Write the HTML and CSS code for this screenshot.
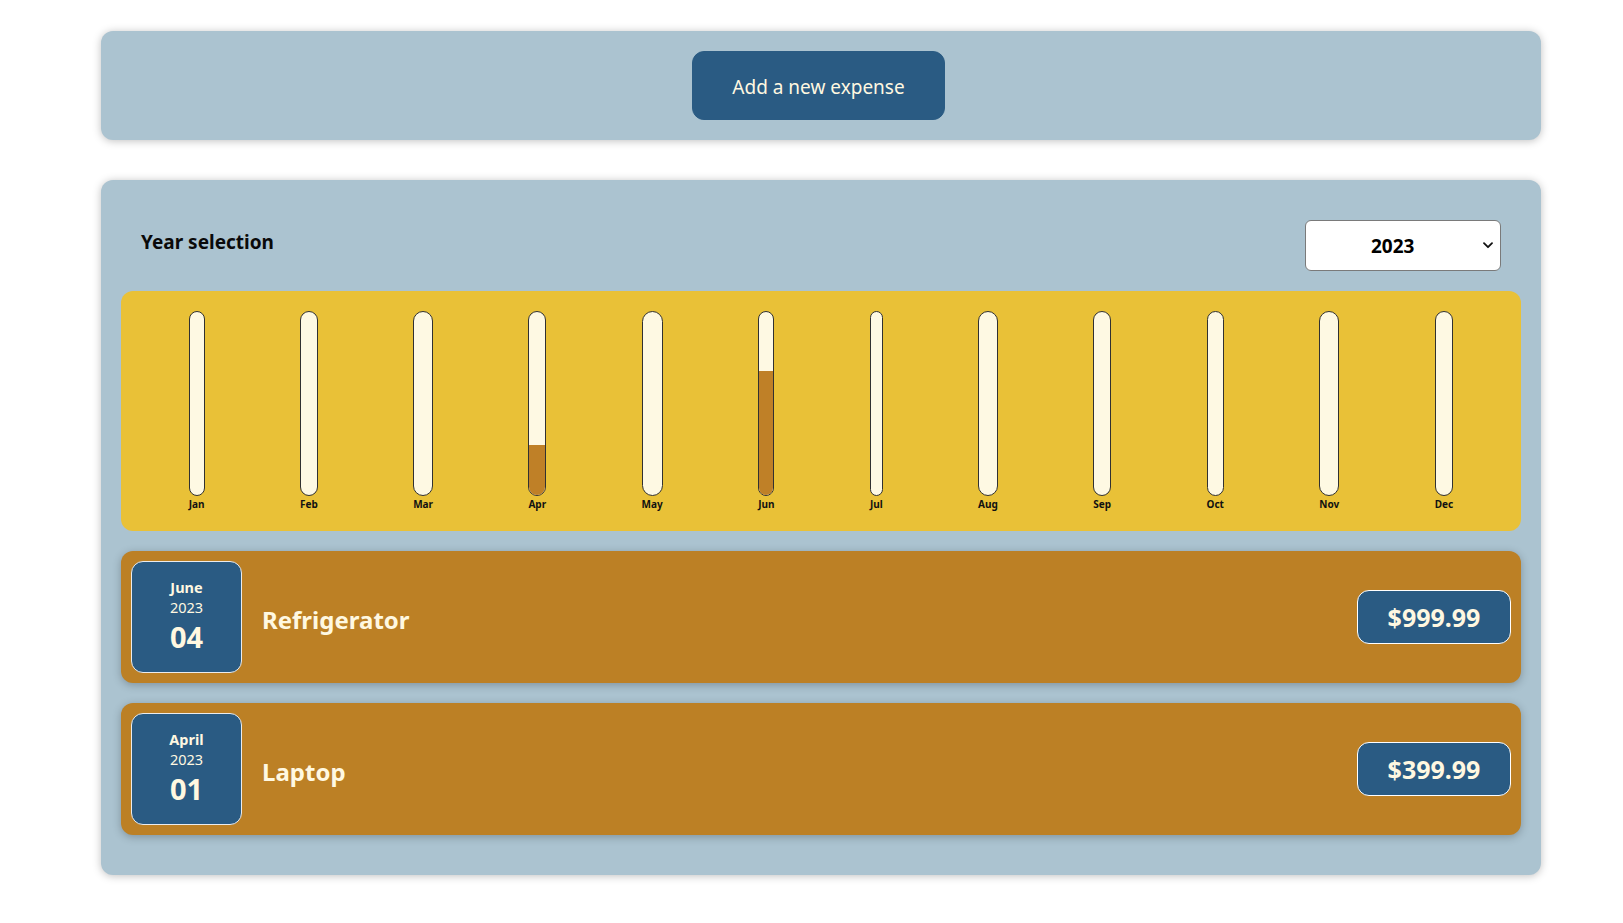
FILE: index.html
```html
<!DOCTYPE html>
<html lang="en">
<head>
<meta charset="utf-8">
<title>Expenses</title>
<link rel="stylesheet" href="styles.css">
</head>
<body>
  <div class="new-expense">
    <button class="new-expense__btn" type="button">Add a new expense</button>
  </div>

  <div class="expenses">
    <div class="filter">
      <label class="filter__label" for="year">Year selection</label>
      <div class="filter__select-wrap">
        <select id="year" class="filter__select">
          <option>2023</option>
          <option>2022</option>
          <option>2021</option>
          <option>2020</option>
        </select>
        <svg class="filter__chevron" width="10" height="7" viewBox="0 0 10 7" aria-hidden="true">
          <path d="M1 1.2 L5 5.2 L9 1.2" fill="none" stroke="#111" stroke-width="1.8" stroke-linecap="round" stroke-linejoin="round"/>
        </svg>
      </div>
    </div>

    <div class="chart">
      <div class="bar"><div class="bar__inner"><div class="bar__fill" style="height:0%"></div></div><div class="bar__label">Jan</div></div>
      <div class="bar"><div class="bar__inner"><div class="bar__fill" style="height:0%"></div></div><div class="bar__label">Feb</div></div>
      <div class="bar"><div class="bar__inner"><div class="bar__fill" style="height:0%"></div></div><div class="bar__label">Mar</div></div>
      <div class="bar"><div class="bar__inner"><div class="bar__fill" style="height:27.2%"></div></div><div class="bar__label">Apr</div></div>
      <div class="bar"><div class="bar__inner"><div class="bar__fill" style="height:0%"></div></div><div class="bar__label">May</div></div>
      <div class="bar"><div class="bar__inner"><div class="bar__fill" style="height:68%"></div></div><div class="bar__label">Jun</div></div>
      <div class="bar"><div class="bar__inner"><div class="bar__fill" style="height:0%"></div></div><div class="bar__label">Jul</div></div>
      <div class="bar"><div class="bar__inner"><div class="bar__fill" style="height:0%"></div></div><div class="bar__label">Aug</div></div>
      <div class="bar"><div class="bar__inner"><div class="bar__fill" style="height:0%"></div></div><div class="bar__label">Sep</div></div>
      <div class="bar"><div class="bar__inner"><div class="bar__fill" style="height:0%"></div></div><div class="bar__label">Oct</div></div>
      <div class="bar"><div class="bar__inner"><div class="bar__fill" style="height:0%"></div></div><div class="bar__label">Nov</div></div>
      <div class="bar"><div class="bar__inner"><div class="bar__fill" style="height:0%"></div></div><div class="bar__label">Dec</div></div>
    </div>

    <ul class="list">
      <li class="item">
        <div class="date">
          <div class="date__month">June</div>
          <div class="date__year">2023</div>
          <div class="date__day">04</div>
        </div>
        <h2 class="item__title">Refrigerator</h2>
        <div class="item__price">$999.99</div>
      </li>
      <li class="item">
        <div class="date">
          <div class="date__month">April</div>
          <div class="date__year">2023</div>
          <div class="date__day">01</div>
        </div>
        <h2 class="item__title">Laptop</h2>
        <div class="item__price">$399.99</div>
      </li>
    </ul>
  </div>
</body>
</html>
```

FILE: styles.css
```css
* {
  box-sizing: border-box;
}

html {
  font-size: 20px;
}

body {
  margin: 0;
  background: #ffffff;
  font-family: "Noto Sans", "Open Sans", "Liberation Sans", sans-serif;
}

.new-expense {
  width: 1440px;
  margin: 31px 0 0 101px;
  padding: 20px;
  background: #abc3d0;
  border-radius: 12px;
  box-shadow: 0 1px 8px rgba(0, 0, 0, 0.25);
  display: flex;
  justify-content: center;
}

.new-expense__btn {
  font-family: inherit;
  font-size: 19px;
  line-height: 27px;
  color: #fff8e1;
  background: #2a5b83;
  border: 1px solid #2a5b83;
  border-radius: 12px;
  width: 253px;
  height: 69px;
  padding: 4px 0 0;
  margin-right: 5px;
  cursor: pointer;
}

.expenses {
  width: 1440px;
  margin: 40px 0 40px 101px;
  padding: 20px;
  background: #abc3d0;
  border-radius: 12px;
  box-shadow: 0 1px 8px rgba(0, 0, 0, 0.25);
}

.filter {
  display: flex;
  align-items: center;
  justify-content: space-between;
  padding: 0 20px;
  margin: 20px 0;
}

.filter__label {
  font-weight: 700;
  font-size: 19px;
  color: #0a0a0a;
  margin-bottom: 8px;
}

.filter__select-wrap {
  position: relative;
  width: 196px;
  height: 51px;
}

.filter__select {
  appearance: none;
  -webkit-appearance: none;
  width: 100%;
  height: 100%;
  padding: 1px 0 0 65px;
  font-family: inherit;
  font-size: 19px;
  font-weight: 700;
  color: #000;
  background: #ffffff;
  border: 1px solid #7a7a7a;
  border-radius: 6px;
}

.filter__chevron {
  position: absolute;
  right: 8px;
  top: 22px;
  pointer-events: none;
}

.chart {
  height: 240px;
  padding: 20px;
  border-radius: 12px;
  background: #e9c137;
  display: flex;
  justify-content: space-around;
}

.bar {
  height: 100%;
  display: flex;
  flex-direction: column;
  align-items: center;
}

.bar__inner {
  flex: 1;
  width: 100%;
  border: 1px solid #313131;
  border-radius: 12px;
  background: #fef9e3;
  overflow: hidden;
  display: flex;
  flex-direction: column;
  justify-content: flex-end;
}

.bar__fill {
  width: 100%;
  background: #bf8027;
}

.bar__label {
  font-size: 10px;
  line-height: 14px;
  font-weight: 700;
  color: #111;
  text-align: center;
  padding-top: 1px;
}

.list {
  list-style: none;
  margin: 0;
  padding: 0;
}

.item {
  display: flex;
  align-items: center;
  padding: 10px;
  margin: 20px 0;
  border-radius: 12px;
  background: #bc8025;
  box-shadow: 0 2px 8px rgba(0, 0, 0, 0.25);
}

.date {
  width: 111px;
  height: 112px;
  flex: none;
  display: flex;
  flex-direction: column;
  align-items: center;
  justify-content: center;
  border: 1px solid #ececec;
  border-radius: 12px;
  background: #2a5b83;
  color: #fff8e1;
}

.date__month {
  font-size: 14.5px;
  line-height: 20px;
  font-weight: 700;
}

.date__year {
  font-size: 14.5px;
  line-height: 20px;
}

.date__day {
  font-size: 29px;
  line-height: 40px;
  font-weight: 700;
}

.item__title {
  flex: 1;
  margin: 4px 20px 0;
  font-size: 24px;
  font-weight: 700;
  color: #fff8e1;
}

.item__price {
  font-size: 25px;
  line-height: 32px;
  font-weight: 700;
  color: #fff8e1;
  background: #2a5b83;
  border: 1px solid #ffffff;
  border-radius: 12px;
  width: 154px;
  height: 54px;
  padding: 10px 0;
  text-align: center;
}
```
